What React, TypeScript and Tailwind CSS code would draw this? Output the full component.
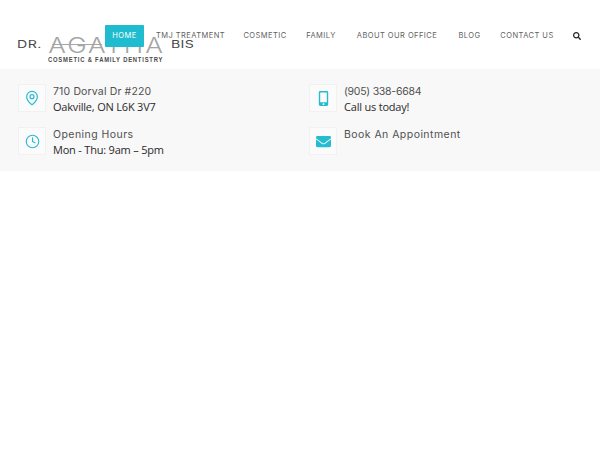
import { Clock, MapPin } from "lucide-react";
import { FaEnvelope, FaMobileAlt, FaSearch } from "react-icons/fa";
import type { ReactNode } from "react";

const navLinks = [
  { label: "TMJ TREATMENT", width: "w-[67px]" },
  { label: "COSMETIC", width: "w-[42px]" },
  { label: "FAMILY", width: "w-[30px]" },
  { label: "ABOUT OUR OFFICE", width: "w-[82px]" },
  { label: "BLOG", width: "w-[23px]" },
  { label: "CONTACT US", width: "w-[52px]" },
];

const Logo = () => {
  return (
    <div className="absolute left-[17px] top-[35px] w-[178px]">
      <div className="flex items-center justify-between h-[20px] leading-none text-[#4a4a4a]">
        <span className="inline-block origin-left scale-x-[1.35] text-[10.5px] tracking-[0.3px] font-['Inter']">
          DR.
        </span>
        <span className="relative inline-block scale-x-125 text-[21px] tracking-[1.5px] text-[#a3a5a6] font-['Inter'] font-light">
          AGATHA
          <span className="absolute left-[3px] right-[50px] top-[9px] h-px bg-[#a3a5a6]"></span>
        </span>
        <span className="inline-block origin-right -translate-x-px scale-x-[1.35] text-[10.5px] tracking-[0.3px] font-['Inter']">
          BIS
        </span>
      </div>
      <p className="ml-[31px] w-[158px] origin-left scale-x-[0.73] whitespace-nowrap text-[8px] leading-[10px] font-bold tracking-[1.1px] text-[#4b4b4b] font-['Liberation_Sans']">
        COSMETIC &amp; FAMILY DENTISTRY
      </p>
    </div>
  );
};

const Header = () => {
  return (
    <header className="relative h-[69px] bg-white">
      <Logo />
      <nav className="relative flex items-center h-[69px] pt-[2px] pl-[105px] font-['Inter'] text-[7.5px] tracking-[0.45px] text-[#5f5f5f]">
        <a className="flex items-center justify-center w-[39px] h-[22px] rounded-[1px] bg-[#1fbccf] text-white">
          HOME
        </a>
        <div className="flex items-center gap-5 ml-[13px] whitespace-nowrap">
          {navLinks.map(({ label, width }) => (
            <a key={label} className={`${width} flex justify-center`}>
              {label}
            </a>
          ))}
          <FaSearch className="w-2 h-2 text-[#222222]" />
        </div>
      </nav>
    </header>
  );
};

const IconBox = ({ children }: { children: ReactNode }) => {
  return (
    <div className="flex items-center justify-center shrink-0 w-7 h-7 bg-[#fbfbfb] border border-[#f1f1f1] text-[#25bcd0]">
      {children}
    </div>
  );
};

const InfoItem = ({
  icon,
  title,
  detail,
  titleClass = "tracking-[0.45px]",
}: {
  icon: ReactNode;
  title: string;
  detail?: string;
  titleClass?: string;
}) => {
  return (
    <div className="flex gap-[7px] h-7">
      <IconBox>{icon}</IconBox>
      <div>
        <p className={`font-['Inter'] text-[10.5px] leading-[15px] text-[#505050] ${titleClass}`}>
          {title}
        </p>
        {detail && (
          <p className="font-['Open_Sans'] text-[11px] leading-[15px] -tracking-[0.2px] text-[#2a2a2a]">
            {detail}
          </p>
        )}
      </div>
    </div>
  );
};

const App = () => {
  return (
    <div className="w-[600px] h-[450px] overflow-hidden bg-white">
      <Header />
      <section className="grid grid-cols-[291px_1fr] h-[102px] pt-[15px] pl-[18px] bg-[#f8f8f8]">
        <div className="flex flex-col gap-[15px]">
          <InfoItem
            icon={<MapPin className="w-4 h-4" strokeWidth={1.8} />}
            title="710 Dorval Dr #220"
            titleClass="tracking-[0.15px]"
            detail="Oakville, ON L6K 3V7"
          />
          <InfoItem
            icon={<Clock className="w-[15px] h-[15px]" strokeWidth={1.8} />}
            title="Opening Hours"
            detail="Mon - Thu: 9am – 5pm"
          />
        </div>
        <div className="flex flex-col gap-[15px]">
          <InfoItem
            icon={<FaMobileAlt className="w-[15px] h-[15px]" />}
            title="(905) 338-6684"
            titleClass="-tracking-[0.25px]"
            detail="Call us today!"
          />
          <InfoItem
            icon={<FaEnvelope className="w-[15px] h-[15px]" />}
            title="Book An Appointment"
          />
        </div>
      </section>
    </div>
  );
};

export default App;
